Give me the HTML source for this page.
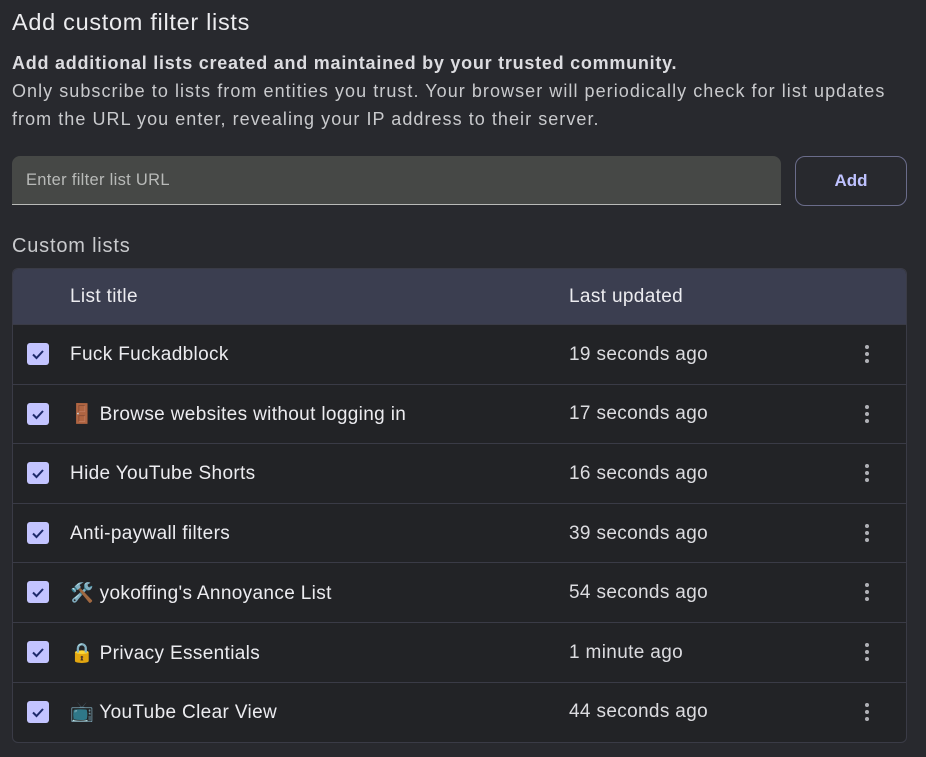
<!DOCTYPE html>
<html><head><meta charset="utf-8"><style>
body{margin:0;background:#28292e;color:#e3e3e6;font-family:"Liberation Sans","Noto Sans CJK JP",sans-serif;width:926px;height:757px;overflow:hidden;position:relative}
.a{position:absolute}
h1{position:absolute;left:12px;top:9px;margin:0;font-size:23.5px;font-weight:normal;color:#ececef;letter-spacing:0.7px}
.p{left:12px;top:49px;font-size:18px;line-height:28px;color:#c9cacd;width:910px;letter-spacing:1.05px;white-space:nowrap}
.p b{color:#dcdce0;letter-spacing:0.75px}
.inp{left:12px;top:156px;width:769px;height:48px;background:#464846;border-radius:8px 8px 0 0;border-bottom:1.5px solid #b9bab8}
.inp span{position:absolute;left:14px;top:15px;font-size:16.5px;color:#b8bab8;letter-spacing:0.3px}
.btn{left:795px;top:156px;width:110px;height:48px;border:1px solid #6a6c8a;border-radius:10px;text-align:center;line-height:48px;color:#bfc2ff;font-weight:bold;font-size:17px}
.cl{left:12px;top:235px;font-size:20px;color:#c9cacd;letter-spacing:0.8px}
.tbl{left:12px;top:268px;width:893px;height:473px;border:1px solid #3a3b46;border-radius:6px;overflow:hidden;background:#222326}
.hd{height:55px;background:#3b3e50;position:relative;font-size:19px;color:#ececf0}
.row{height:58.6px;border-top:1px solid #3a3b46;position:relative;font-size:19px;color:#ececf0}
.t1{position:absolute;left:57px;top:51%;transform:translateY(-50%);letter-spacing:0.35px;white-space:nowrap}
.t2{position:absolute;left:556px;top:51%;transform:translateY(-50%);color:#dcdce0;letter-spacing:0.35px;white-space:nowrap}
.cb{position:absolute;left:14px;top:18px;width:22px;height:22px;background:#c3c4ff;border-radius:3px}
.dots{position:absolute;left:852px;top:20px;width:4px}
.dots i{display:block;width:4px;height:4px;border-radius:2px;background:#b0b1b6;margin-bottom:3px}
</style></head><body>
<h1>Add custom filter lists</h1>
<div class="a p"><b>Add additional lists created and maintained by your trusted community.</b><br>Only subscribe to lists from entities you trust. Your browser will periodically check for list updates<br>from the URL you enter, revealing your IP address to their server.</div>
<div class="a inp"><span>Enter filter list URL</span></div>
<div class="a btn">Add</div>
<div class="a cl">Custom lists</div>
<div class="a tbl">
<div class="hd"><span class="t1">List title</span><span class="t2" style="color:#ececf0">Last updated</span></div>
<div class="row"><div class="cb"><svg width="22" height="22"><path d="M6 11.5l3.5 3.5 6.5-7" stroke="#1d2a6a" stroke-width="2" fill="none"/></svg></div><span class="t1">Fuck Fuckadblock</span><span class="t2">19 seconds ago</span><div class="dots"><i></i><i></i><i></i></div></div>
<div class="row"><div class="cb"><svg width="22" height="22"><path d="M6 11.5l3.5 3.5 6.5-7" stroke="#1d2a6a" stroke-width="2" fill="none"/></svg></div><span class="t1">🚪 Browse websites without logging in</span><span class="t2">17 seconds ago</span><div class="dots"><i></i><i></i><i></i></div></div>
<div class="row"><div class="cb"><svg width="22" height="22"><path d="M6 11.5l3.5 3.5 6.5-7" stroke="#1d2a6a" stroke-width="2" fill="none"/></svg></div><span class="t1">Hide YouTube Shorts</span><span class="t2">16 seconds ago</span><div class="dots"><i></i><i></i><i></i></div></div>
<div class="row"><div class="cb"><svg width="22" height="22"><path d="M6 11.5l3.5 3.5 6.5-7" stroke="#1d2a6a" stroke-width="2" fill="none"/></svg></div><span class="t1">Anti-paywall filters</span><span class="t2">39 seconds ago</span><div class="dots"><i></i><i></i><i></i></div></div>
<div class="row"><div class="cb"><svg width="22" height="22"><path d="M6 11.5l3.5 3.5 6.5-7" stroke="#1d2a6a" stroke-width="2" fill="none"/></svg></div><span class="t1">🛠️ yokoffing's Annoyance List</span><span class="t2">54 seconds ago</span><div class="dots"><i></i><i></i><i></i></div></div>
<div class="row"><div class="cb"><svg width="22" height="22"><path d="M6 11.5l3.5 3.5 6.5-7" stroke="#1d2a6a" stroke-width="2" fill="none"/></svg></div><span class="t1">🔒 Privacy Essentials</span><span class="t2">1 minute ago</span><div class="dots"><i></i><i></i><i></i></div></div>
<div class="row"><div class="cb"><svg width="22" height="22"><path d="M6 11.5l3.5 3.5 6.5-7" stroke="#1d2a6a" stroke-width="2" fill="none"/></svg></div><span class="t1">📺 YouTube Clear View</span><span class="t2">44 seconds ago</span><div class="dots"><i></i><i></i><i></i></div></div>
</div>
</body></html>
